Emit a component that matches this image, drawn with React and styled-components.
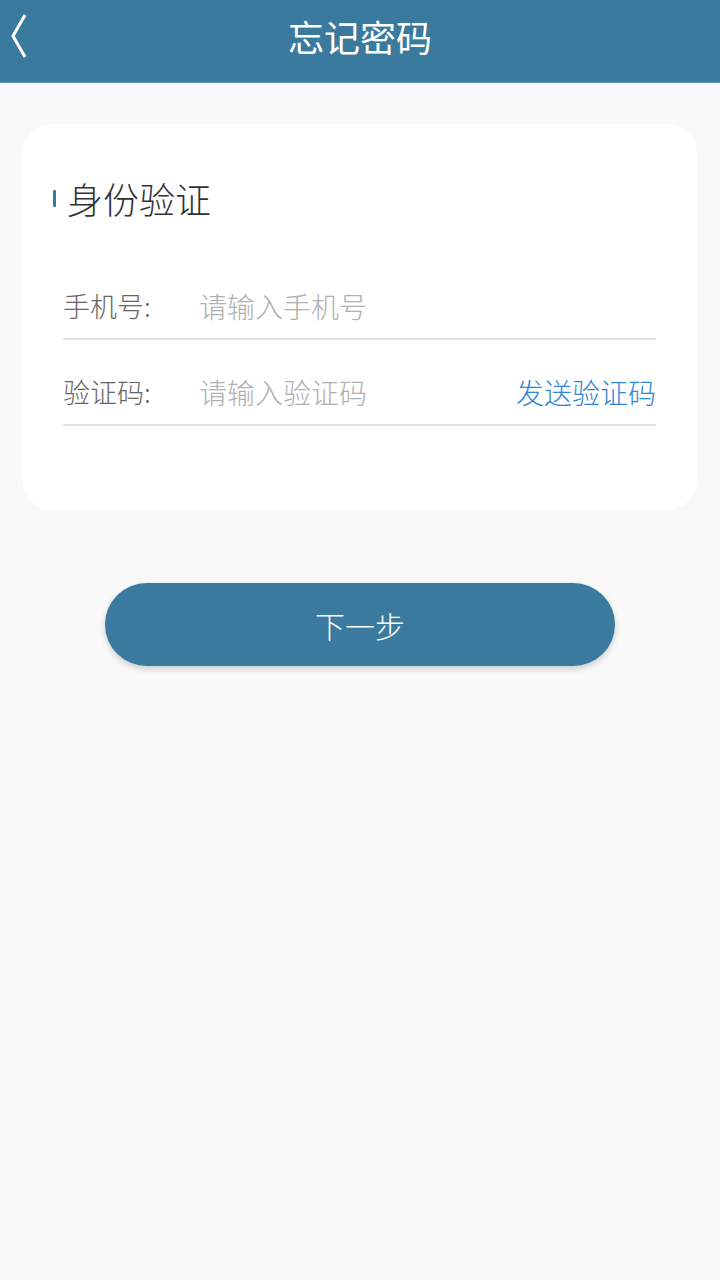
import React from "react";
import styled, { createGlobalStyle } from "styled-components";

const Global = createGlobalStyle`
  html, body { margin: 0; padding: 0; background: #f9f9f9; }
  body { font-family: "Noto Sans CJK SC", "Noto Sans", sans-serif; }
  * { box-sizing: border-box; }
`;

const Page = styled.div`
  min-height: 1280px;
  background: #f9f9f9;
  display: flex;
  flex-direction: column;
`;

const Header = styled.header`
  height: 83px;
  background: #3a7a9e;
  border-bottom: 1px solid #5d93b3;
  display: flex;
  align-items: center;
  justify-content: center;
  position: relative;
`;

const Back = styled.button`
  position: absolute;
  left: 7px;
  top: 11px;
  width: 26px;
  height: 50px;
  border: 0;
  padding: 0;
  background: none;
  display: flex;
  align-items: center;
  justify-content: center;
`;

const Title = styled.h1`
  margin: 0;
  color: #fff;
  font-size: 36px;
  font-weight: 400;
  line-height: 1;
  margin-top: -11px;
`;

const Card = styled.section`
  margin: 41px 23px 0 22px;
  background: #fff;
  border-radius: 30px;
  padding: 56px 41px 84px 41px;
`;

const SectionTitle = styled.div`
  display: flex;
  align-items: center;
  gap: 11px;
  margin-left: -10px;
  font-size: 36px;
  font-weight: 300;
  color: #333;
  line-height: 1;
  margin-bottom: 38px;
`;

const Marker = styled.span`
  width: 3px;
  height: 17px;
  background: #3a7a9e;
  border-radius: 1px;
`;

const Row = styled.div`
  display: flex;
  align-items: flex-end;
  height: 86px;
  border-bottom: 2px solid #e4e4e4;
  font-size: 27px;
  font-weight: 300;
  line-height: 32px;
  padding-bottom: 16px;
`;

const Label = styled.span`
  width: 136px;
  color: #666;
  flex-shrink: 0;
`;

const Placeholder = styled.span`
  flex: 1;
  color: #b0b0b0;
  font-size: 28px;
`;

const SendCode = styled.span`
  color: #2f86d6;
  font-size: 28px;
`;

const Button = styled.button`
  margin: 73px auto 0;
  width: 510px;
  height: 83px;
  border-radius: 42px;
  border: 0;
  background: #3a7a9e;
  color: #fff;
  font-family: inherit;
  font-size: 30px;
  font-weight: 300;
  box-shadow: 0 3px 6px rgba(0, 0, 0, 0.18);
`;

export default function App() {
  return (
    <>
      <Global />
      <Page>
        <Header>
          <Back aria-label="返回">
            <svg width="26" height="50" viewBox="0 0 26 50">
              <polyline
                points="18,4 6,25 18,46"
                fill="none"
                stroke="#fff"
                strokeWidth="3"
                strokeLinejoin="miter"
              />
            </svg>
          </Back>
          <Title>忘记密码</Title>
        </Header>
        <Card>
          <SectionTitle>
            <Marker />
            身份验证
          </SectionTitle>
          <Row>
            <Label>手机号:</Label>
            <Placeholder>请输入手机号</Placeholder>
          </Row>
          <Row>
            <Label>验证码:</Label>
            <Placeholder>请输入验证码</Placeholder>
            <SendCode>发送验证码</SendCode>
          </Row>
        </Card>
        <Button>下一步</Button>
      </Page>
    </>
  );
}
